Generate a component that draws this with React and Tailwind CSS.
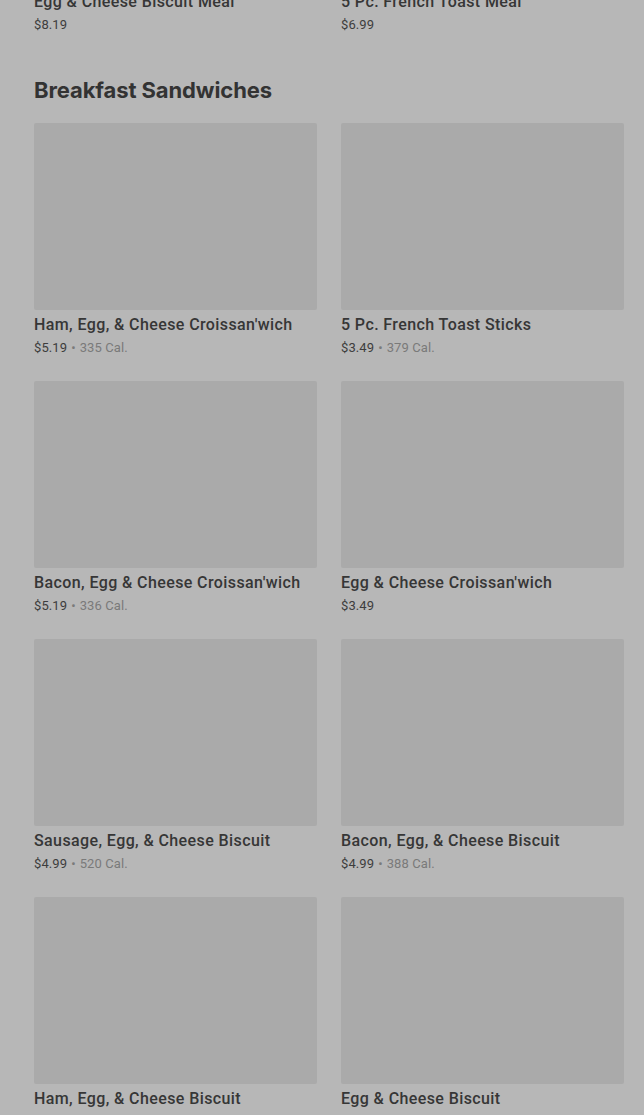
import React from 'react';

const PREV = [
  { name: 'Egg & Cheese Biscuit Meal', price: '$8.19' },
  { name: '5 Pc. French Toast Meal', price: '$6.99' },
];

const ITEMS = [
  { name: "Ham, Egg, & Cheese Croissan'wich", price: '$5.19', cal: '335 Cal.' },
  { name: '5 Pc. French Toast Sticks', price: '$3.49', cal: '379 Cal.' },
  { name: "Bacon, Egg & Cheese Croissan'wich", price: '$5.19', cal: '336 Cal.' },
  { name: "Egg & Cheese Croissan'wich", price: '$3.49' },
  { name: 'Sausage, Egg, & Cheese Biscuit', price: '$4.99', cal: '520 Cal.' },
  { name: 'Bacon, Egg, & Cheese Biscuit', price: '$4.99', cal: '388 Cal.' },
  { name: 'Ham, Egg, & Cheese Biscuit', price: '$4.99', cal: '330 Cal.' },
  { name: 'Egg & Cheese Biscuit', price: '$3.49', cal: '290 Cal.' },
];

const ItemCard = ({ item }) => (
  <div className="flex flex-col">
    <div className="h-[187px] rounded-[2px] bg-[#aaaaaa]" />
    <div className="mt-[5px] truncate text-[16px] leading-[20px] font-medium tracking-[0.4px] text-[#363636]">
      {item.name}
    </div>
    <div className="mt-[4px] text-[13px] leading-[18px] tracking-[0.1px] text-[#3d3d3d]">
      {item.price}
      {item.cal && (
        <>
          <span className="mx-[4px] text-[#7a7a7a]">•</span>
          <span className="text-[#7a7a7a]">{item.cal}</span>
        </>
      )}
    </div>
  </div>
);

export default function App() {
  return (
    <div
      className="h-[1115px] overflow-hidden bg-[#b7b7b7] pl-[34px] pr-[20px]"
      style={{ fontFamily: 'Roboto, "Liberation Sans", sans-serif' }}
    >
      {/* tail of previous section */}
      <div className="mt-[-200px] grid grid-cols-2 gap-x-[24px]">
        {PREV.map((item) => (
          <ItemCard key={item.name} item={item} />
        ))}
      </div>

      <h2
        className="mt-[42px] mb-[19px] text-[22px] leading-[28px] font-bold tracking-[-0.1px] text-[#333333]"
        style={{ fontFamily: 'Inter, Roboto, sans-serif' }}
      >
        Breakfast Sandwiches
      </h2>

      <div className="grid grid-cols-2 gap-x-[24px] gap-y-[24px]">
        {ITEMS.map((item) => (
          <ItemCard key={item.name} item={item} />
        ))}
      </div>
    </div>
  );
}
